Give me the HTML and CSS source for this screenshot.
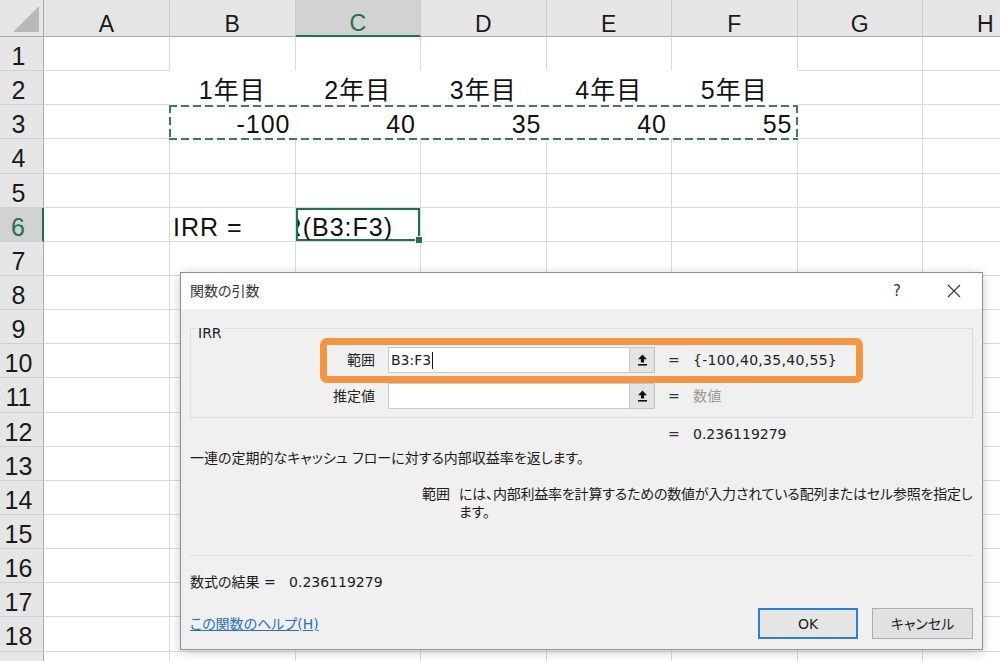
FILE: index.html
```html
<!DOCTYPE html>
<html lang="ja">
<head>
<meta charset="utf-8">
<title>関数の引数 - IRR</title>
<link rel="stylesheet" href="styles.css">
</head>
<body>
<div class="sheet">
  <div class="row hdr">
    <div class="corner"></div><div>A</div><div>B</div><div class="sel">C</div><div>D</div><div>E</div><div>F</div><div>G</div><div>H</div>
  </div>
  <div class="row">
    <div class="rh">1</div><div class="c"></div><div class="c nb"></div><div class="c nb"></div><div class="c nb"></div><div class="c nb"></div><div class="c nb"></div><div class="c"></div><div class="c"></div>
  </div>
  <div class="row">
    <div class="rh">2</div><div class="c nr"></div><div class="c fill ctr">1年目</div><div class="c fill ctr">2年目</div><div class="c fill ctr">3年目</div><div class="c fill ctr">4年目</div><div class="c fill ctr">5年目</div><div class="c"></div><div class="c"></div>
  </div>
  <div class="row marquee-row">
    <div class="rh">3</div><div class="c nr"></div><div class="c fill num">-100</div><div class="c fill num">40</div><div class="c fill num">35</div><div class="c fill num">40</div><div class="c fill num">55</div><div class="c"></div><div class="c"></div>
    <div class="marquee"></div>
  </div>
  <div class="row">
    <div class="rh">4</div><div class="c"></div><div class="c"></div><div class="c"></div><div class="c"></div><div class="c"></div><div class="c"></div><div class="c"></div><div class="c"></div>
  </div>
  <div class="row">
    <div class="rh">5</div><div class="c"></div><div class="c"></div><div class="c"></div><div class="c"></div><div class="c"></div><div class="c"></div><div class="c"></div><div class="c"></div>
  </div>
  <div class="row">
    <div class="rh sel">6</div><div class="c"></div><div class="c txt">IRR =</div><div class="c active"><div class="clip"><span>=IRR(B3:F3)</span></div></div><div class="c"></div><div class="c"></div><div class="c"></div><div class="c"></div><div class="c"></div>
  </div>
  <div class="row">
    <div class="rh">7</div><div class="c"></div><div class="c"></div><div class="c"></div><div class="c"></div><div class="c"></div><div class="c"></div><div class="c"></div><div class="c"></div>
  </div>
  <div class="row">
    <div class="rh">8</div><div class="c"></div><div class="c"></div><div class="c"></div><div class="c"></div><div class="c"></div><div class="c"></div><div class="c"></div><div class="c"></div>
  </div>
  <div class="row">
    <div class="rh">9</div><div class="c"></div><div class="c"></div><div class="c"></div><div class="c"></div><div class="c"></div><div class="c"></div><div class="c"></div><div class="c"></div>
  </div>
  <div class="row">
    <div class="rh">10</div><div class="c"></div><div class="c"></div><div class="c"></div><div class="c"></div><div class="c"></div><div class="c"></div><div class="c"></div><div class="c"></div>
  </div>
  <div class="row">
    <div class="rh">11</div><div class="c"></div><div class="c"></div><div class="c"></div><div class="c"></div><div class="c"></div><div class="c"></div><div class="c"></div><div class="c"></div>
  </div>
  <div class="row">
    <div class="rh">12</div><div class="c"></div><div class="c"></div><div class="c"></div><div class="c"></div><div class="c"></div><div class="c"></div><div class="c"></div><div class="c"></div>
  </div>
  <div class="row">
    <div class="rh">13</div><div class="c"></div><div class="c"></div><div class="c"></div><div class="c"></div><div class="c"></div><div class="c"></div><div class="c"></div><div class="c"></div>
  </div>
  <div class="row">
    <div class="rh">14</div><div class="c"></div><div class="c"></div><div class="c"></div><div class="c"></div><div class="c"></div><div class="c"></div><div class="c"></div><div class="c"></div>
  </div>
  <div class="row">
    <div class="rh">15</div><div class="c"></div><div class="c"></div><div class="c"></div><div class="c"></div><div class="c"></div><div class="c"></div><div class="c"></div><div class="c"></div>
  </div>
  <div class="row">
    <div class="rh">16</div><div class="c"></div><div class="c"></div><div class="c"></div><div class="c"></div><div class="c"></div><div class="c"></div><div class="c"></div><div class="c"></div>
  </div>
  <div class="row">
    <div class="rh">17</div><div class="c"></div><div class="c"></div><div class="c"></div><div class="c"></div><div class="c"></div><div class="c"></div><div class="c"></div><div class="c"></div>
  </div>
  <div class="row">
    <div class="rh">18</div><div class="c"></div><div class="c"></div><div class="c"></div><div class="c"></div><div class="c"></div><div class="c"></div><div class="c"></div><div class="c"></div>
  </div>
  <div class="row">
    <div class="rh"></div><div class="c"></div><div class="c"></div><div class="c"></div><div class="c"></div><div class="c"></div><div class="c"></div><div class="c"></div><div class="c"></div>
  </div>
</div>

<div class="dialog">
  <div class="dlg-title">
    <span class="dlg-name">関数の引数</span>
    <span class="dlg-ctrls">
      <span class="help">?</span>
      <svg class="close" width="14" height="14" viewBox="0 0 14 14"><path d="M1 1L13 13M13 1L1 13" stroke="#3a3a3a" stroke-width="1.2" fill="none"/></svg>
    </span>
  </div>
  <div class="dlg-body">
    <div class="group">
      <span class="caption">IRR</span>
      <div class="arg">
        <span class="arg-name">範囲</span>
        <span class="arg-input">B3:F3<i class="caret"></i></span>
        <span class="ref-btn"><svg width="11" height="12" viewBox="0 0 11 12"><path d="M5.5 0.5L10 5.2H7.1V8.6H3.9V5.2H1Z" fill="#111"/><rect x="1" y="10" width="9" height="1.6" fill="#111"/></svg></span>
        <span class="eq">=</span>
        <span class="arg-val">{-100,40,35,40,55}</span>
      </div>
      <div class="arg">
        <span class="arg-name">推定値</span>
        <span class="arg-input"></span>
        <span class="ref-btn"><svg width="11" height="12" viewBox="0 0 11 12"><path d="M5.5 0.5L10 5.2H7.1V8.6H3.9V5.2H1Z" fill="#111"/><rect x="1" y="10" width="9" height="1.6" fill="#111"/></svg></span>
        <span class="eq">=</span>
        <span class="arg-val muted">数値</span>
      </div>
    </div>
    <div class="total"><span class="eq">=</span><span>0.236119279</span></div>
    <p class="desc">一連の定期的なキャッシュ フローに対する内部収益率を返します。</p>
    <div class="argdesc">
      <span class="argdesc-name">範囲</span>
      <span class="argdesc-text">には、内部利益率を計算するための数値が入力されている配列またはセル参照を指定し<br>ます。</span>
    </div>
    <div class="sep"></div>
    <div class="result">数式の結果 =&nbsp;&nbsp; 0.236119279</div>
    <div class="footer">
      <a class="help-link" href="#">この関数のヘルプ(H)</a>
      <div class="buttons">
        <span class="btn ok">OK</span>
        <span class="btn">キャンセル</span>
      </div>
    </div>
  </div>
  <div class="highlight"></div>
</div>
</body>
</html>
```

FILE: styles.css
```css
* { box-sizing: border-box; }
html, body { margin: 0; padding: 0; }
body {
  width: 1000px;
  height: 661px;
  overflow: hidden;
  position: relative;
  background: #ffffff;
  font-family: "Liberation Sans", "Noto Sans CJK JP", sans-serif;
  color: #111;
}

/* ---------- spreadsheet ---------- */
.sheet { display: flex; flex-direction: column; }
.row {
  display: grid;
  grid-template-columns: 44px 126px repeat(7, 125.5px);
  height: 34.15px;
  flex: none;
}
.hdr { height: 37px; background: #e6e6e6; }
.hdr > div {
  border-right: 1px solid #cbcbcb;
  border-bottom: 1px solid #ababab;
  font-size: 23px;
  line-height: 1;
  color: #1a1a1a;
  display: flex;
  justify-content: center;
  align-items: center;
  padding-top: 12px;
}
.hdr > .sel {
  background: #d2d2d2;
  color: #217346;
  border-bottom: 2px solid #217346;
}
.hdr > .corner { position: relative; border-right-color: #ababab; }
.corner::after {
  content: "";
  position: absolute;
  right: 4px;
  bottom: 4px;
  width: 26px;
  height: 26px;
  background: #b9b9b9;
  clip-path: polygon(100% 0, 100% 100%, 0 100%);
}
.rh {
  background: #e6e6e6;
  border-right: 1px solid #ababab;
  border-bottom: 1px solid #cfcfcf;
  font-size: 25px;
  line-height: 1;
  color: #1a1a1a;
  display: flex;
  align-items: center;
  justify-content: center;
  padding: 6px 6px 0 0;
}
.rh.sel {
  background: #d2d2d2;
  color: #217346;
  border-right: 2px solid #217346;
}
.c {
  border-right: 1px solid #dadada;
  border-bottom: 1px solid #dadada;
  font-size: 25px;
  line-height: 1;
  letter-spacing: 1px;
  display: flex;
  align-items: center;
  padding: 6px 4px 0 3px;
  white-space: nowrap;
  overflow: hidden;
  color: #111;
}
.c.nb { border-bottom-color: #ffffff; }
.c.nr { border-right-color: #ffffff; }
.c.fill { border-right-color: #ffffff; border-bottom-color: #ffffff; }
.c.ctr { justify-content: center; padding-left: 0; padding-right: 0; }
.c.num { justify-content: flex-end; }
.c.txt { padding-left: 3px; }
.c.active {
  position: relative;
  padding-right: 27px;
  padding-left: 2px;
  box-shadow: inset 0 0 0 2px #217346;
  overflow: visible;
}
.clip {
  flex: 1;
  min-width: 0;
  overflow: hidden;
  display: flex;
  justify-content: flex-end;
}
.clip span { flex: none; }
.c.active::after {
  content: "";
  position: absolute;
  right: -3px;
  bottom: -3px;
  width: 6px;
  height: 6px;
  background: #217346;
  border: 1px solid #fff;
}
.marquee-row { position: relative; }
.marquee {
  position: absolute;
  left: 169px;
  top: 0;
  width: 629px;
  height: 35px;
  background:
    repeating-linear-gradient(90deg, #3e7c58 0 8px, transparent 8px 12px) top left / 100% 2px no-repeat,
    repeating-linear-gradient(90deg, #3e7c58 0 8px, transparent 8px 12px) bottom left / 100% 2px no-repeat,
    repeating-linear-gradient(180deg, #3e7c58 0 8px, transparent 8px 12px) top left / 2px 100% no-repeat,
    repeating-linear-gradient(180deg, #3e7c58 0 8px, transparent 8px 12px) top right / 2px 100% no-repeat;
}

/* ---------- dialog ---------- */
.dialog {
  position: absolute;
  left: 180px;
  top: 272px;
  width: 803px;
  height: 378px;
  background: #f0f0f0;
  border: 1px solid #8f8f8f;
  box-shadow: 0 2px 10px rgba(0, 0, 0, 0.22);
  font-family: "DejaVu Sans", "Noto Sans CJK JP", sans-serif;
  font-size: 14px;
  line-height: 20px;
  color: #1b1b1b;
  font-feature-settings: "palt";
  display: flex;
  flex-direction: column;
}
.dlg-title {
  height: 36px;
  background: #ffffff;
  display: flex;
  align-items: center;
  padding: 0 21px 0 9px;
  flex: none;
}
.dlg-name { color: #333; }
.dlg-ctrls { margin-left: auto; display: flex; align-items: center; gap: 46px; }
.help { color: #333; font-size: 15px; }
.close { display: block; }

.dlg-body {
  flex: 1;
  display: flex;
  flex-direction: column;
  padding: 19px 9px 0;
}
.group {
  position: relative;
  border: 1px solid #dcdcdc;
  padding: 18px 0 8px;
  display: flex;
  flex-direction: column;
  gap: 10px;
}
.caption {
  position: absolute;
  left: 5px;
  top: -3px;
  padding: 0 2px;
  background: #f0f0f0;
  line-height: 14px;
  color: #222;
}
.arg { display: flex; align-items: center; height: 26px; }
.arg-name { width: 184px; text-align: right; color: #222; }
.arg-input {
  margin-left: 13px;
  width: 242px;
  height: 26px;
  background: #ffffff;
  border: 1px solid #c9c9c9;
  padding-left: 2px;
  display: flex;
  align-items: center;
  color: #222;
}
.caret { display: inline-block; width: 1px; height: 17px; background: #111; margin-left: 1px; }
.ref-btn {
  width: 25px;
  height: 26px;
  background: #e4e4e4;
  border: 1px solid #c4c4c4;
  border-left: none;
  display: flex;
  align-items: center;
  justify-content: center;
}
.eq { width: 25px; margin-left: 13px; color: #333; flex: none; }
.arg-val { color: #222; letter-spacing: 0.3px; }
.muted { color: #9a9a9a; }

.total { display: flex; margin-top: 6px; padding-left: 465px; color: #222; }
.desc { margin: 4px 0 0; color: #1b1b1b; white-space: nowrap; }
.argdesc { display: flex; margin-top: 17px; padding-left: 232px; line-height: 18px; }
.argdesc-name { width: 37px; flex: none; }
.argdesc-text { white-space: nowrap; letter-spacing: -0.2px; }
.sep { height: 1px; background: #dedede; margin-top: 34px; }
.result { margin-top: 16px; color: #1b1b1b; }
.footer {
  margin-top: 16px;
  display: flex;
  align-items: center;
  justify-content: space-between;
}
.help-link { color: #2a6fc0; text-decoration: underline; font-size: 14px; }
.buttons { display: flex; gap: 14px; }
.btn {
  width: 101px;
  height: 31px;
  display: flex;
  align-items: center;
  justify-content: center;
  background: #e1e1e1;
  border: 1px solid #adadad;
  color: #1b1b1b;
}
.btn.ok { width: 100px; border: 2px solid #2f7fd0; background: #e5e5e5; }

.highlight {
  position: absolute;
  left: 139px;
  top: 65px;
  width: 543px;
  height: 45px;
  border: 7px solid #f29545;
  border-radius: 7px;
  pointer-events: none;
}
```
